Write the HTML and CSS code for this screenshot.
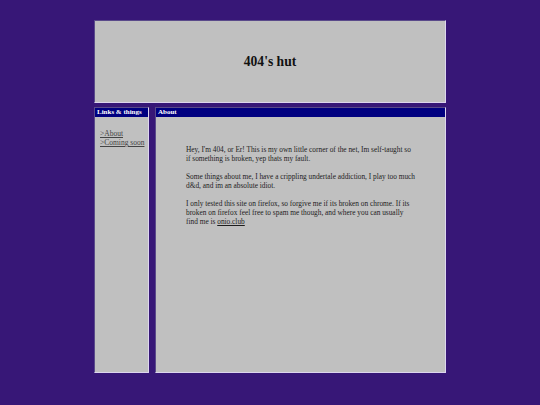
FILE: index.html
```html
<!DOCTYPE html>
<html>
<head>
<meta charset="utf-8">
<link rel="stylesheet" href="styles.css">
</head>
<body>
<div class="page">
  <header class="box header">
    <h1 class="site-title">404's hut</h1>
  </header>
  <div class="row">
    <nav class="box sidebar">
      <div class="bar">Links &amp; things</div>
      <ul class="links">
        <li><a href="#">&gt;About</a></li>
        <li><a href="#">&gt;Coming soon</a></li>
      </ul>
    </nav>
    <main class="box main">
      <div class="bar">About</div>
      <div class="content">
        <p>Hey, I'm 404, or Er! This is my own little corner of the net, Im self-taught so if&nbsp;something is broken, yep thats my fault.</p>
        <p>Some things about me, I have a crippling undertale addiction, I play too much d&amp;d, and im an absolute idiot.</p>
        <p>I only tested this site on firefox, so forgive me if its broken on chrome. If its broken on firefox feel free to spam me though, and where you can usually find&nbsp;me is <a href="#">onio.club</a></p>
      </div>
    </main>
  </div>
</div>
</body>
</html>
```
FILE: styles.css
```css
html, body {
  margin: 0;
  padding: 0;
  background: #371777;
  font-family: "Liberation Serif", "Times New Roman", serif;
  color: #1e1e1e;
}
.page {
  width: 352px;
  margin: 20px 0 0 94px;
  display: flex;
  flex-direction: column;
  gap: 4px;
}
.box {
  background: #c0c0c0;
  box-sizing: border-box;
  border-style: solid;
  border-width: 1px;
  border-color: #5a4a8a #ddd6ee #ddd6ee #5a4a8a;
}
.header {
  height: 83px;
  display: flex;
  align-items: center;
  justify-content: center;
}
.site-title {
  margin: 0;
  font-size: 13.6px;
  font-weight: bold;
  color: #111;
}
.row {
  display: flex;
  gap: 6px;
  height: 266px;
}
.sidebar {
  width: 55px;
}
.main {
  width: 291px;
}
.bar {
  background: #000080;
  color: #fff;
  font-weight: bold;
  font-size: 7px;
  line-height: 9px;
  height: 9px;
  padding-left: 2px;
  white-space: nowrap;
}
.links {
  list-style: none;
  margin: 0;
  padding: 12px 0 0 5px;
  font-size: 7.5px;
  line-height: 9px;
}
.links a {
  color: #444;
}
.content {
  padding: 28px 26px 0 30px;
  font-size: 7.35px;
  line-height: 9px;
}
.content p {
  margin: 0 0 9px 0;
}
.content a {
  color: #1e1e1e;
}
```
